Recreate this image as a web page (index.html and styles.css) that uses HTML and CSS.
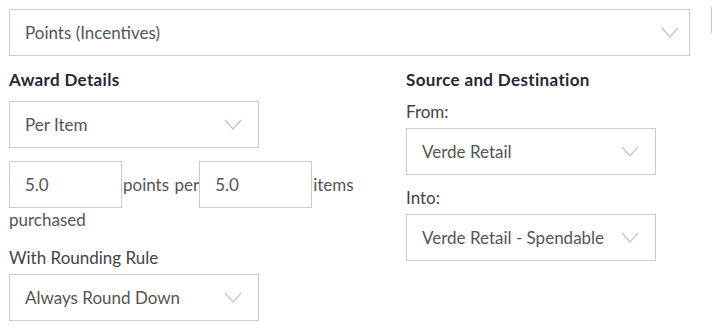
FILE: index.html
```html
<!DOCTYPE html>
<html lang="en">
<head>
    <meta charset="UTF-8">
    <meta name="viewport" content="width=device-width, initial-scale=1.0">
    <title>Award Settings</title>
    <link rel="stylesheet" href="styles.css">
</head>
<body>
    <div class="page">
        <!-- Tipo de recompensa -->
        <div class="select select-wide">
            <span>Points (Incentives)</span>
            <svg class="chevron" width="18" height="11" viewBox="0 0 18 11"><path d="M1 1 L9 10 L17 1" /></svg>
        </div>

        <div class="columns">
            <!-- Award details -->
            <div class="column">
                <h3>Award Details</h3>
                <div class="select">
                    <span>Per Item</span>
                    <svg class="chevron" width="18" height="11" viewBox="0 0 18 11"><path d="M1 1 L9 10 L17 1" /></svg>
                </div>

                <p class="rate"><input type="text" value="5.0"><span class="rate-text">points per</span><input type="text" value="5.0"><span class="rate-text">items purchased</span></p>

                <label class="label">With Rounding Rule</label>
                <div class="select">
                    <span>Always Round Down</span>
                    <svg class="chevron" width="18" height="11" viewBox="0 0 18 11"><path d="M1 1 L9 10 L17 1" /></svg>
                </div>
            </div>

            <!-- Source and destination -->
            <div class="column">
                <h3>Source and Destination</h3>
                <label class="label label-first">From:</label>
                <div class="select">
                    <span>Verde Retail</span>
                    <svg class="chevron" width="18" height="11" viewBox="0 0 18 11"><path d="M1 1 L9 10 L17 1" /></svg>
                </div>

                <label class="label label-spaced">Into:</label>
                <div class="select">
                    <span>Verde Retail - Spendable</span>
                    <svg class="chevron" width="18" height="11" viewBox="0 0 18 11"><path d="M1 1 L9 10 L17 1" /></svg>
                </div>
            </div>
        </div>
    </div>
    <div class="scroll-mark"></div>
</body>
</html>
```

FILE: styles.css
```css
body {
    margin: 0;
    font-family: Lato, "Open Sans", sans-serif;
    font-size: 17px;
    line-height: 24px;
    color: #444;
    background: #fff;
}
.page {
    padding: 9px 22px 0 9px;
}
.select {
    box-sizing: border-box;
    display: flex;
    align-items: center;
    justify-content: space-between;
    width: 250px;
    height: 47px;
    padding: 0 16px 0 15px;
    border: 1px solid #ccc;
    color: #555;
}
.select-wide {
    width: auto;
    padding-right: 10px;
}
.chevron {
    flex: none;
}
.chevron path {
    fill: none;
    stroke: #c6c6c6;
    stroke-width: 1.3;
}
.columns {
    display: grid;
    grid-template-columns: 397px 1fr;
    margin-top: 12px;
}
h3 {
    margin: 0 0 9px;
    font-size: 17px;
    line-height: 24px;
    font-weight: 700;
    letter-spacing: 0.35px;
    color: #272838;
}
.rate {
    margin: 13px 0 0;
    color: #555;
}
.rate-text {
    padding-left: 1px;
    word-spacing: 1px;
}
.rate input {
    box-sizing: border-box;
    width: 113px;
    height: 47px;
    margin: 0;
    padding: 0 15px;
    border: 1px solid #ccc;
    font-family: inherit;
    font-size: 17px;
    color: #555;
    outline: none;
}
.label {
    display: block;
    margin: 14px 0 4px;
}
.label-first {
    margin-top: -1px;
}
.label-spaced {
    margin-top: 11px;
}
.scroll-mark {
    position: absolute;
    top: 7px;
    right: 0;
    width: 1px;
    height: 26px;
    background: #ccc;
}
```
